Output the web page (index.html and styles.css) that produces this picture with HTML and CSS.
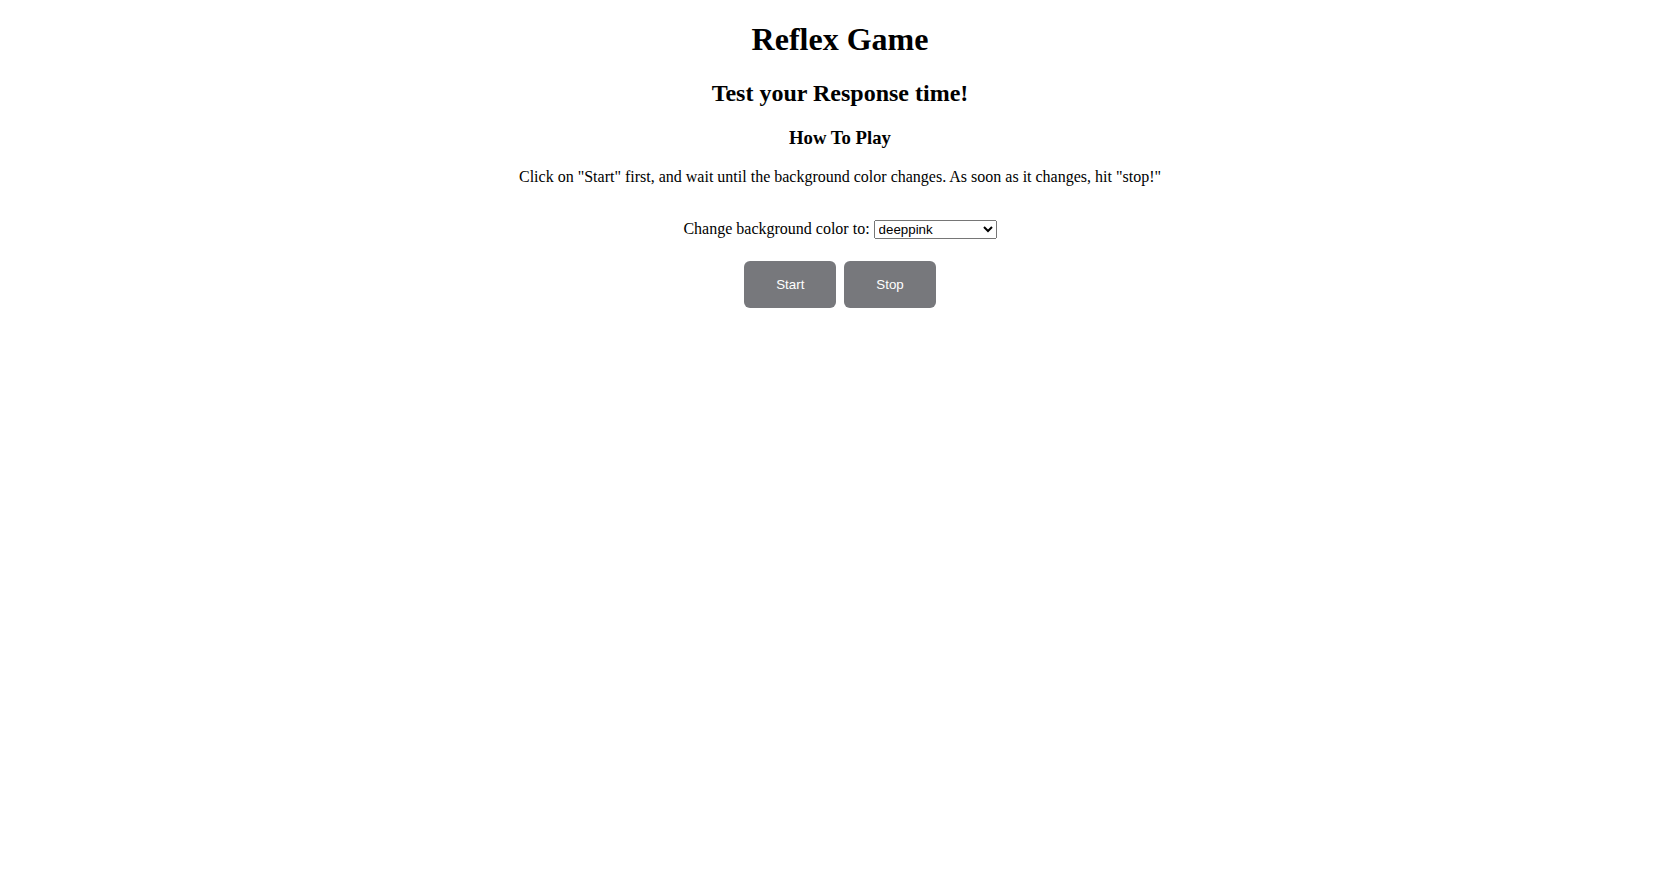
FILE: index.html
```html
<!DOCTYPE html>
<html lang="en">
<head>
  <meta charset="UTF-8">
  <meta name="viewport" content="width=device-width, initial-scale=1.0">
  <title>Reflex Game</title>
  <link rel="stylesheet" href="styles.css">
</head>
<body>
  <h1>Reflex Game</h1>
  <h2>Test your Response time!</h2>
  <h3>How To Play</h3>
  <p>Click on "Start" first, and wait until the background color changes. As soon as it changes, hit "stop!"</p>
  <br>
  <label for="color-select">Change background color to:</label>
  <select id="color-select">
    <option value="deeppink">deeppink</option>
    <option value="green">green</option>
    <option value="blue">blue</option>
    <option value="orange">orange</option>
    <option value="purple">purple</option>
  </select>
  <div class="controls">
    <button id="start-button" class="game-button">Start</button>
    <button id="stop-button" class="game-button">Stop</button>
  </div>
</body>
</html>
```

FILE: styles.css
```css
body {
  margin: 0;
  font-family: "Liberation Serif", "Times New Roman", serif;
  text-align: center;
  background: #fff;
  color: #000;
}
#color-select {
  width: 123px;
}
.controls {
  margin-top: 22px;
}
.game-button {
  padding: 16px 32px;
  margin: 0 2px;
  background: #77787c;
  color: #fff;
  border: none;
  border-radius: 6px;
  font-family: "Liberation Sans", Arial, sans-serif;
  cursor: pointer;
}
.game-button:hover {
  background: #5e5f63;
}
```
